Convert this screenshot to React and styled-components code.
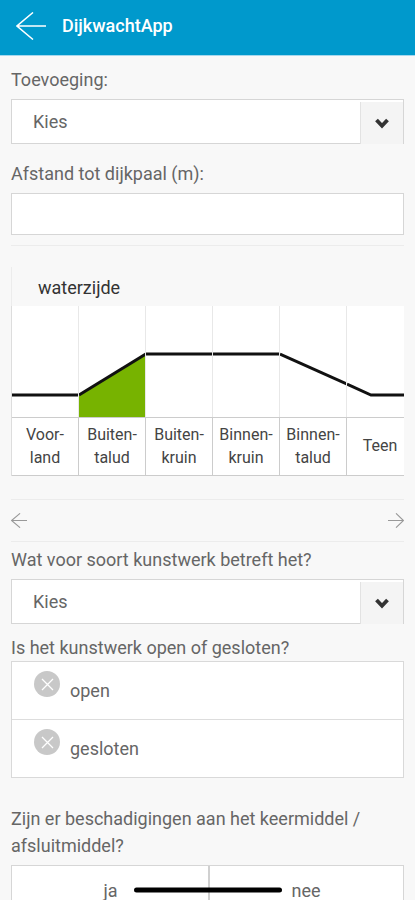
import React, { useState } from "react";
import styled, { createGlobalStyle } from "styled-components";

const segments = [
  { id: "voorland", lines: ["Voor-", "land"], points: "0,89 67,89" },
  { id: "buitentalud", lines: ["Buiten-", "talud"], points: "0,89 67,48" },
  { id: "buitenkruin", lines: ["Buiten-", "kruin"], points: "0,48 67,48" },
  { id: "binnenkruin", lines: ["Binnen-", "kruin"], points: "0,48 67,48" },
  { id: "binnentalud", lines: ["Binnen-", "talud"], points: "0,48 67,78" },
  { id: "teen", lines: ["Teen"], points: "0,78 24,89 67,89" },
];

const Arrow = ({ width, height, stroke, flip }) => (
  <svg
    width={width}
    height={height}
    viewBox="0 0 30 28"
    fill="none"
    stroke="currentColor"
    strokeWidth={stroke}
    aria-hidden="true"
  >
    <path
      d={flip ? "M0 14H29M15 0.5L29 14L15 27.5" : "M30 14H1M17 0.5L1 14L17 27.5"}
    />
  </svg>
);

const KiesSelect = ({ id }) => (
  <SelectBox>
    <Select id={id} defaultValue="">
      <option value="">Kies</option>
    </Select>
    <SelectToggle>
      <svg width="14" height="11" viewBox="0 0 14 11" aria-hidden="true">
        <path
          d="M1.5 2L7 7.8L12.5 2"
          fill="none"
          stroke="#333"
          strokeWidth="3.8"
        />
      </svg>
    </SelectToggle>
  </SelectBox>
);

const App = () => {
  const [active, setActive] = useState("buitentalud");

  return (
    <>
      <GlobalStyle />
      <Screen>
        <Header>
          <BackButton type="button" aria-label="Terug">
            <Arrow width={30} height={28} stroke={1.5} />
          </BackButton>
          <Title>DijkwachtApp</Title>
        </Header>

        <Main>
          <Field>
            <Label htmlFor="toevoeging">Toevoeging:</Label>
            <KiesSelect id="toevoeging" />
          </Field>
          <Field>
            <Label htmlFor="afstand">Afstand tot dijkpaal (m):</Label>
            <TextInput id="afstand" type="text" />
          </Field>

          <Profile>
            <ProfileTitle>waterzijde</ProfileTitle>
            <Strip>
              {segments.map(({ id, lines, points }) => (
                <Segment key={id} type="button" onClick={() => setActive(id)}>
                  <Chart viewBox="0 0 66 111" aria-hidden="true">
                    {active === id && (
                      <polygon points={`${points} 67,111 0,111`} fill="#77b300" />
                    )}
                    <polyline
                      points={points}
                      fill="none"
                      stroke="#111"
                      strokeWidth="3"
                    />
                  </Chart>
                  <SegmentName>
                    {lines.map((line) => (
                      <span key={line}>{line}</span>
                    ))}
                  </SegmentName>
                </Segment>
              ))}
            </Strip>
          </Profile>

          <Pager>
            <PagerButton type="button" aria-label="Vorige">
              <Arrow width={16} height={15} stroke={2} />
            </PagerButton>
            <PagerButton type="button" aria-label="Volgende">
              <Arrow width={16} height={15} stroke={2} flip />
            </PagerButton>
          </Pager>

          <Label htmlFor="soort">Wat voor soort kunstwerk betreft het?</Label>
          <KiesSelect id="soort" />

          <Group>
            <Legend>Is het kunstwerk open of gesloten?</Legend>
            <OptionList>
              {["open", "gesloten"].map((name) => (
                <Option key={name}>
                  <Mark>
                    <Radio type="radio" name="stand" value={name} />
                    <svg width="13" height="13" viewBox="0 0 13 13" aria-hidden="true">
                      <path
                        d="M1 1L12 12M12 1L1 12"
                        stroke="#fff"
                        strokeWidth="1.3"
                      />
                    </svg>
                  </Mark>
                  <span>{name}</span>
                </Option>
              ))}
            </OptionList>
          </Group>

          <Question id="schade">
            Zijn er beschadigingen aan het keermiddel / afsluitmiddel?
          </Question>
          <Choices role="group" aria-labelledby="schade">
            <Choice type="button" $side="left">
              ja
            </Choice>
            <Choice type="button" $side="right">
              nee
            </Choice>
            <Bar />
          </Choices>
        </Main>
      </Screen>
    </>
  );
};

const GlobalStyle = createGlobalStyle`
  * {
    box-sizing: border-box;
  }

  body {
    margin: 0;
    background: #f8f8f8;
    color: #666;
    font-family: Roboto, sans-serif;
    font-size: 18px;
    line-height: 27px;
  }

  button,
  input,
  select {
    margin: 0;
    padding: 0;
    border: 0;
    border-radius: 0;
    background: none;
    color: inherit;
    font: inherit;
  }
`;

const Screen = styled.div`
  display: flex;
  flex-direction: column;
  height: 100vh;
`;

const Header = styled.header`
  display: flex;
  flex: none;
  align-items: center;
  gap: 16px;
  height: 56px;
  padding: 0 16px 4px;
  border-bottom: 1px solid #a6d8ee;
  background: #0099cc;
  color: #fff;
`;

const BackButton = styled.button`
  display: flex;
`;

const Title = styled.h1`
  margin: 0;
  font-size: 18px;
  font-weight: 500;
`;

const Main = styled.main`
  flex: 1;
  min-height: 0;
  padding: 10px 11px 0;
  overflow-y: auto;
  scrollbar-width: none;
`;

const Field = styled.div`
  margin-bottom: 16px;
`;

const Label = styled.label`
  display: block;
  margin-bottom: 6px;
`;

const SelectBox = styled.div`
  position: relative;
`;

const Select = styled.select`
  display: block;
  width: 100%;
  height: 45px;
  padding: 0 48px 0 21px;
  appearance: none;
  border: 1px solid #d6d6d6;
  background: #fff;
`;

const SelectToggle = styled.span`
  position: absolute;
  top: 3px;
  right: 1px;
  bottom: 0;
  display: flex;
  align-items: center;
  justify-content: center;
  width: 43px;
  border-left: 1px solid #e2e2e2;
  background: #f4f4f4;
  pointer-events: none;
`;

const TextInput = styled.input`
  display: block;
  width: 100%;
  height: 42px;
  padding: 0 21px;
  border: 1px solid #d6d6d6;
  background: #fff;
`;

const Profile = styled.section`
  margin-top: -6px;
  padding-top: 21px;
  border-top: 1px solid #ececec;
`;

const ProfileTitle = styled.h2`
  margin: 0;
  padding: 7px 26px 5px;
  border-left: 1px solid #ececec;
  color: #333;
  font-size: 18px;
  font-weight: 400;
`;

const Strip = styled.div`
  display: flex;
  overflow: hidden;
  border-left: 1px solid #ddd;
`;

const Segment = styled.button`
  display: flex;
  flex: none;
  flex-direction: column;
  width: 67px;
  background: #fff;
  color: #444;
`;

const Chart = styled.svg`
  width: 67px;
  height: 111px;
  border-right: 1px solid #e8e8e8;
`;

const SegmentName = styled.span`
  display: flex;
  flex-direction: column;
  justify-content: center;
  align-items: center;
  width: 100%;
  height: 59px;
  padding-bottom: 2px;
  border: 1px solid #ccc;
  border-left: 0;
  font-size: 16px;
  line-height: 23px;
`;

const Pager = styled.nav`
  display: flex;
  align-items: center;
  justify-content: space-between;
  height: 43px;
  margin: 23px 0 4px;
  border: 1px solid #ececec;
  border-width: 1px 0;
`;

const PagerButton = styled.button`
  display: flex;
  color: #999;
`;

const Group = styled.fieldset`
  min-width: 0;
  margin: 10px 0 27px;
  padding: 0;
  border: 0;
`;

const Legend = styled.legend`
  padding: 0;
`;

const OptionList = styled.div`
  border: 1px solid #d9d9d9;
  background: #fff;
`;

const Option = styled.label`
  display: flex;
  gap: 10px;
  height: 57px;
  padding: 15px 22px 0;

  & + & {
    height: 58px;
    border-top: 1px solid #ddd;
  }
`;

const Mark = styled.span`
  display: grid;
  place-items: center;
  width: 26px;
  height: 26px;
  margin-top: -6px;

  > * {
    grid-area: 1 / 1;
  }

  svg {
    pointer-events: none;
  }
`;

const Radio = styled.input`
  width: 26px;
  height: 26px;
  appearance: none;
  border-radius: 50%;
  background: #c8c8c8;

  &:checked {
    background: #77b300;
  }
`;

const Question = styled.p`
  margin: 0 0 6px;
`;

const Choices = styled.div`
  position: relative;
  display: grid;
  grid-template-columns: 1fr 1fr;
  border: 1px solid #d6d6d6;
  background: #fff;
`;

const Choice = styled.button`
  height: 48px;
  padding: ${({ $side }) => ($side === "left" ? "0 90px 0 0" : "0 0 0 82px")};
  border-left: ${({ $side }) => ($side === "right" ? "2px solid #d0d0d0" : "0")};
  text-align: ${({ $side }) => ($side === "left" ? "right" : "left")};
`;

const Bar = styled.span`
  position: absolute;
  top: 50%;
  left: 50%;
  width: 148px;
  height: 5px;
  border-radius: 3px;
  background: #000;
  transform: translate(-50%, -50%);
`;

export default App;
